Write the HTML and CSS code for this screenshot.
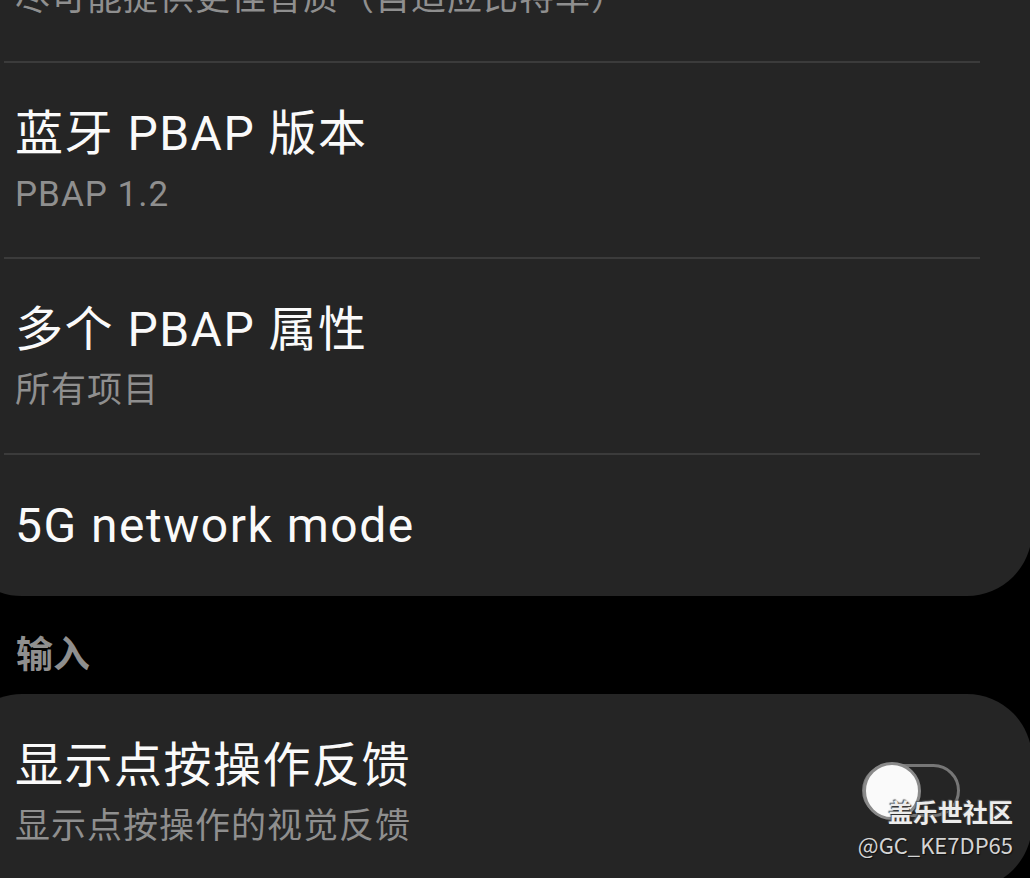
FILE: index.html
```html
<!DOCTYPE html>
<html lang="zh-CN">
<head>
  <meta charset="UTF-8" />
  <title>连接偏好设置</title>
  <link rel="stylesheet" href="styles.css">
</head>
<body>
  <!-- Bluetooth / network card -->
  <div class="card card-top">
    <div class="item">
      <div class="title">蓝牙 A2DP 编解码器</div>
      <div class="summary">尽可能提供更佳音质（自适应比特率）</div>
    </div>
    <div class="item">
      <div class="title">蓝牙 PBAP 版本</div>
      <div class="summary">PBAP 1.2</div>
    </div>
    <div class="item">
      <div class="title">多个 PBAP 属性</div>
      <div class="summary">所有项目</div>
    </div>
    <div class="item single">
      <div class="title">5G network mode</div>
    </div>
  </div>

  <div class="section-title">输入</div>

  <!-- Input card -->
  <div class="card">
    <div class="item switch-item">
      <div class="texts">
        <div class="title">显示点按操作反馈</div>
        <div class="summary">显示点按操作的视觉反馈</div>
      </div>
      <div class="switch">
        <span class="thumb"></span>
      </div>
    </div>
  </div>

  <div class="watermark">
    <div class="wm-name">盖乐世社区</div>
    <div class="wm-user">@GC_KE7DP65</div>
  </div>
</body>
</html>
```

FILE: styles.css
```css
body {
  margin: 0;
  background: #000;
  font-family: Roboto, "Noto Sans CJK SC", sans-serif;
  overflow: hidden;
  height: 878px;
  position: relative;
}

.card {
  background: #252525;
  border-radius: 65px;
  margin-left: -43px;
  width: 1075px;
}

/* first card is scrolled past its top */
.card-top {
  margin-top: -133px;
}

.item {
  margin: 0 52px 0 47px;
  padding: 40px 0 37px 11px;
  border-top: 2px solid #3b3b3b;
}

.item:first-child {
  border-top: none;
}

.item.single {
  padding: 40px 0 39px 11px;
}

.title {
  color: #fafafa;
  font-size: 48px;
  line-height: 62px;
  letter-spacing: 1.5px;
  white-space: nowrap;
}

.summary {
  color: #8f8f8f;
  font-size: 35px;
  line-height: 50px;
  letter-spacing: 1px;
  margin-top: 5px;
  white-space: nowrap;
}

.section-title {
  color: #8f8f8f;
  font-size: 37px;
  font-weight: 600;
  line-height: 50px;
  padding: 35px 0 13px 16px;
}

.switch-item {
  display: flex;
  align-items: center;
  justify-content: space-between;
  padding-top: 41px;
}

.switch {
  position: relative;
  width: 92px;
  height: 47px;
  border: 3px solid #767676;
  border-radius: 30px;
  margin-right: 20px;
  margin-top: -6px;
}

.thumb {
  position: absolute;
  left: -2px;
  top: -5px;
  width: 52px;
  height: 52px;
  border-radius: 50%;
  background: #fafafa;
  border: 3px solid #8a8a8a;
}

.watermark {
  position: absolute;
  right: 17px;
  bottom: 18px;
  text-align: right;
  font-family: "Noto Sans CJK SC", sans-serif;
}

.wm-name {
  color: #ececec;
  font-size: 25px;
  font-weight: 700;
  line-height: 34px;
  text-shadow: 1px 1px 1px #2a2a2a, -1px -1px 1px #555;
}

.wm-user {
  color: #d4d4d4;
  font-size: 22px;
  line-height: 32px;
  text-shadow: 1px 1px 1px #111;
}
```
